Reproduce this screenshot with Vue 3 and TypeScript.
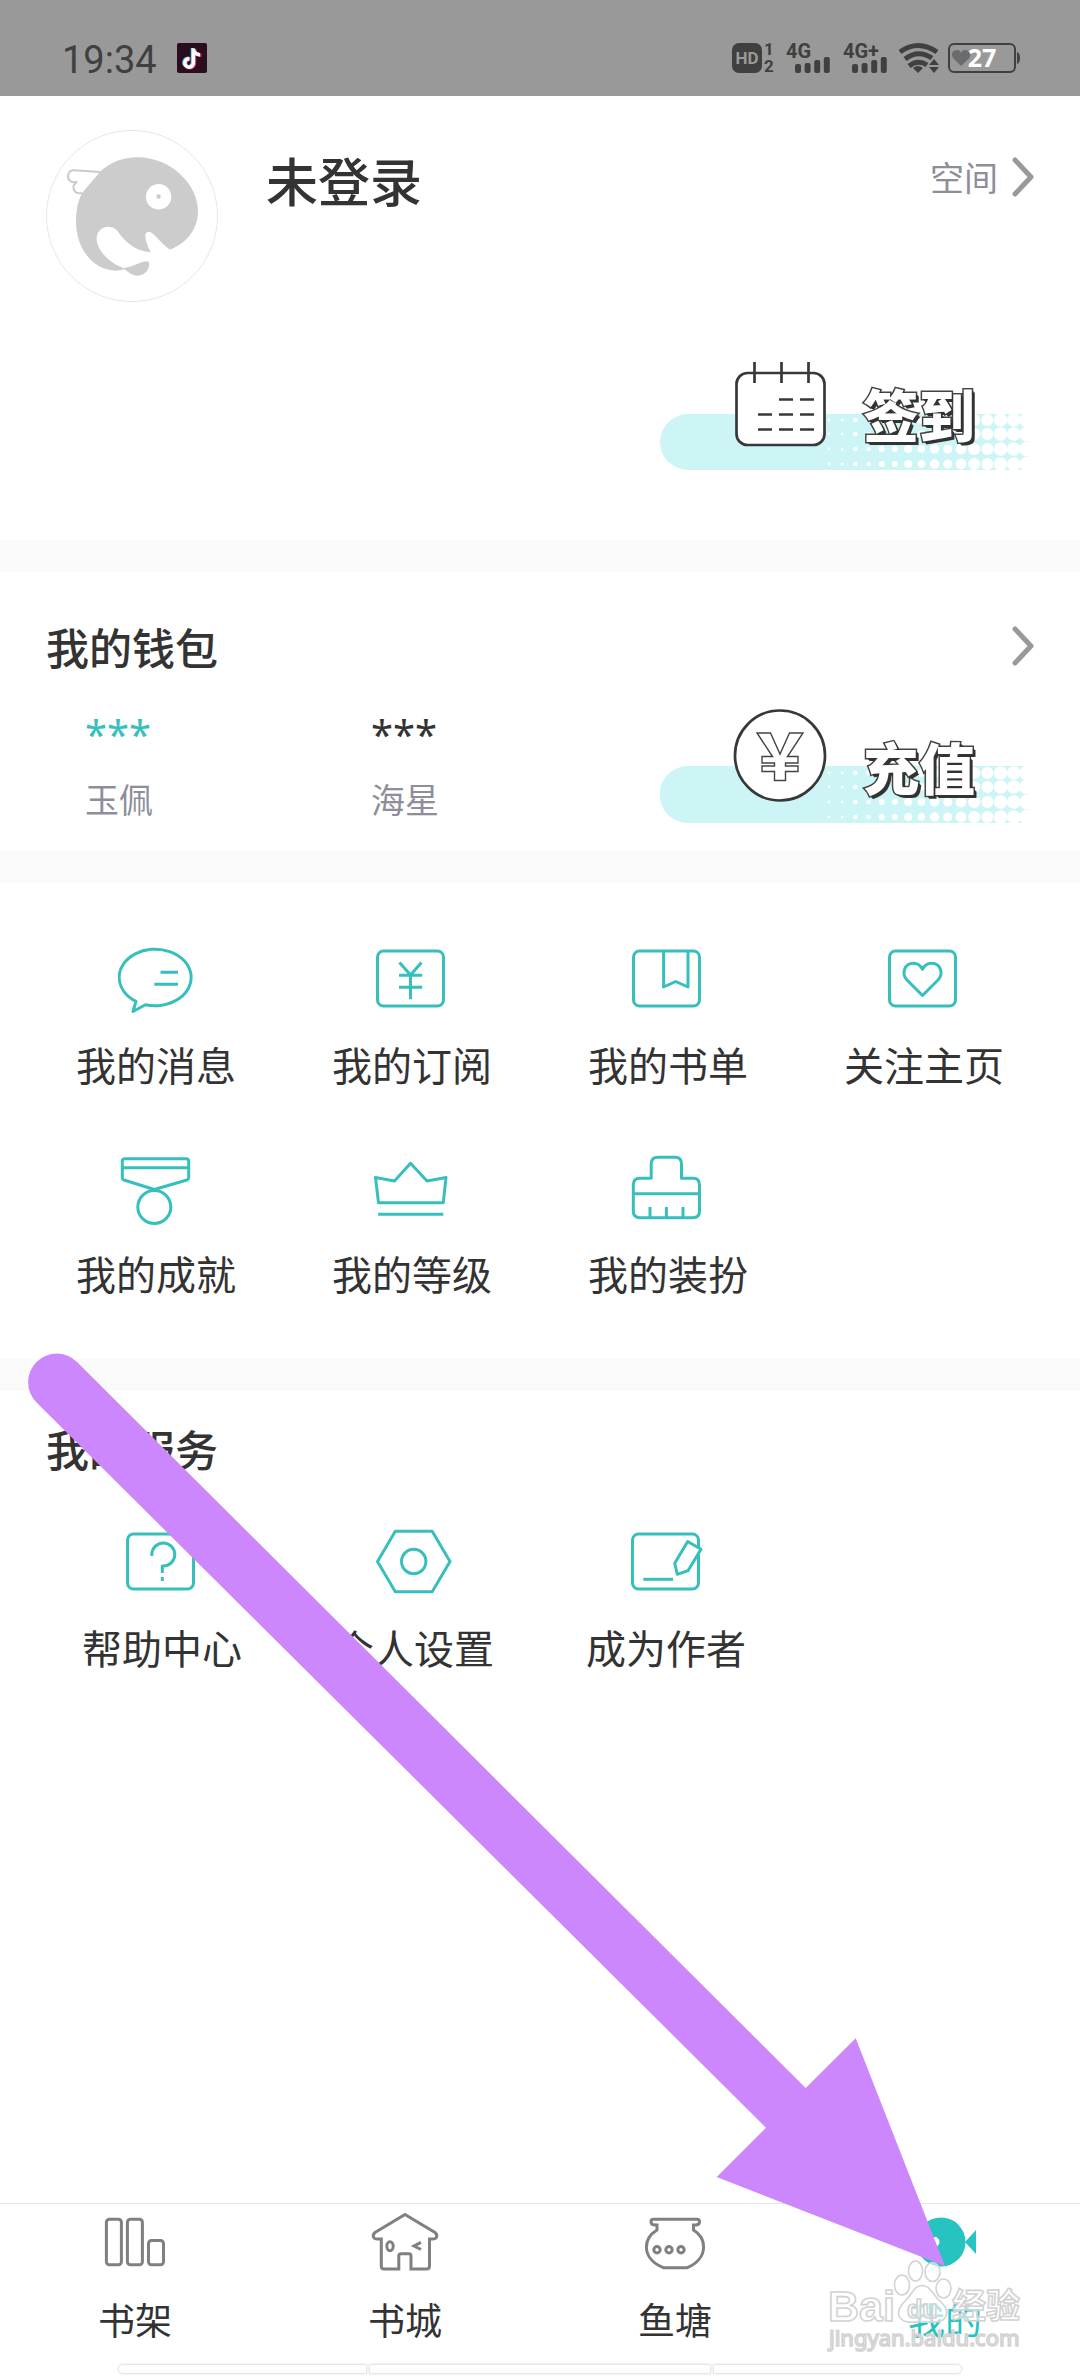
<script setup lang="ts">
interface MenuItem {
  id: string
  label: string
}

const menu: MenuItem[] = [
  { id: 'message', label: '我的消息' },
  { id: 'subscribe', label: '我的订阅' },
  { id: 'booklist', label: '我的书单' },
  { id: 'follow', label: '关注主页' },
  { id: 'achievement', label: '我的成就' },
  { id: 'level', label: '我的等级' },
  { id: 'dress', label: '我的装扮' },
]

const services: MenuItem[] = [
  { id: 'help', label: '帮助中心' },
  { id: 'settings', label: '个人设置' },
  { id: 'author', label: '成为作者' },
]

const tabs: MenuItem[] = [
  { id: 'shelf', label: '书架' },
  { id: 'store', label: '书城' },
  { id: 'pond', label: '鱼塘' },
  { id: 'mine', label: '我的' },
]

const banners = { sign: '签到', recharge: '充值' }

// Halftone dots that eat into the right end of the banner pill
const radii = [1.4, 1.6, 2.2, 2.3, 3, 3, 4, 3.8, 4.7, 4.5, 5.4, 6, 6, 6.8, 6.8, 7.6]
const dots = radii.flatMap((r, col) =>
  [64, 78, 93, 108].map((cy) => ({ cx: 169 + col * 13.2, cy, r })),
)
const signalBars = [9, 10, 13, 16]
</script>

<template>
  <div class="app">
    <header class="status">
      <div class="status-left">
        <time class="clock">19:34</time>
        <svg class="note" width="30" height="30" viewBox="0 0 30 30" aria-hidden="true">
          <rect width="30" height="30" rx="2" fill="#2b0d20" />
          <g fill="none" stroke-width="3.4">
            <path d="M15.5 5V19.5a4.3 4.3 0 1 1-4-4.3M15.5 6c1 3.5 3.5 5.2 7 5.5" stroke="#5fdfe4" />
            <path d="M17.5 6V20.5a4.3 4.3 0 1 1-4-4.3M17.5 7c1 3.5 3.5 5.2 7 5.5" stroke="#e0294f" />
            <path d="M16.5 5.5V20a4.3 4.3 0 1 1-4-4.3M16.5 6.5c1 3.5 3.5 5.2 6.5 5.5" stroke="#fff" />
          </g>
        </svg>
      </div>
      <svg class="status-icons" width="290" height="50" viewBox="731 33 290 50" role="img" aria-label="信号与电量">
        <g fill="#404040">
          <rect x="732" y="43" width="30" height="30" rx="7" />
          <text x="747" y="64" text-anchor="middle" class="st-hd">HD</text>
          <text x="769" y="55" text-anchor="middle" class="st-sim">1</text>
          <text x="769" y="72" text-anchor="middle" class="st-sim">2</text>
          <text x="786" y="58" class="st-net">4G</text>
          <text x="843" y="58" class="st-net">4G+</text>
          <template v-for="x in [795, 852]" :key="x">
            <rect v-for="(h, i) in signalBars" :key="i" :x="x + i * 9.6" :y="73 - h" width="6" :height="h" rx="2" />
          </template>
          <path d="M913 68q5-4 10 0l-5 5z" />
          <path d="M934 59l5 6h-10zM934 73l5-6h-10z" />
        </g>
        <g fill="none" stroke="#404040" stroke-width="5">
          <path d="M900 52Q918 39 937 52" />
          <path d="M905 59Q918 49 932 58" />
          <path d="M909 66Q918 59 927 65" />
          <rect x="949" y="44" width="66" height="28" rx="5" stroke-width="2" />
        </g>
        <path d="M1017 52q3 1 3 6t-3 6z" fill="#404040" />
        <path d="M961 66L953.5 58.5C950 54 953 50 957 50q3 0 4 3q1-3 4-3C970 50 972 54 969 58.5Z" fill="#6b6b6b" />
        <text x="982" y="67" text-anchor="middle" class="st-bat">27</text>
      </svg>
    </header>

    <main class="content">
      <section class="profile">
        <div class="profile-head">
          <svg class="avatar" width="172" height="172" viewBox="0 0 172 172" role="img" aria-label="头像">
            <circle cx="86" cy="86" r="85.5" fill="#fff" stroke="#e6e6e6" />
            <path
              d="M92 27.3C124 27.3 152 54 152 81C152 99 141 113 124 119.7C117 115 111 107 106.5 103.5C103 100.5 99.5 101.5 99.3 105.5C99.2 111 102 117 104.7 122.3C93 121.5 84 116 76 107C71.5 101.5 70 96.7 62 96.7C55.5 96.7 50.6 102 50.6 109C51 120 63 133 77.5 138C86 137 93 132.5 100 131.3C103 131 103.5 133 103 136C102 142 97 145.7 91 145.7C86 145.7 82.5 142 78 139C76 140.3 73 140.7 70 140.7C46 140 30 118 30 90.7C30 80 32 71 36 63.3C41 54 46 47 54 41.7C65 32 77 27.3 92 27.3Z"
              fill="#ccc"
            />
            <path d="M54 42L28 40.2C22 40 20.500 47 23.500 50.500C25.500 52.500 28.500 52.500 31 51.800C26.500 54.500 26.500 59 29.500 62C31.500 63.500 34 63.500 36 63" fill="#fff" stroke="#ccc" stroke-width="2" />
            <circle cx="112.6" cy="66.7" r="12.7" fill="#fff" />
            <circle cx="112.6" cy="66.5" r="2.2" fill="#ccc" />
          </svg>
          <h1 class="name">未登录</h1>
          <a class="space" href="#space">
            空间
            <svg class="chevron" width="22" height="40" viewBox="0 0 22 40" aria-hidden="true"><path d="M3 3L19 20L3 37" /></svg>
          </a>
        </div>
        <button class="banner" type="button">
          <svg class="banner-art" width="374" height="114" viewBox="0 0 374 114" aria-hidden="true">
            <path d="M28 58H368V114H28A28 28 0 0 1 28 58Z" fill="#cdf5f5" />
            <circle v-for="(d, i) in dots" :key="i" :cx="d.cx" :cy="d.cy" :r="d.r" fill="#fff" />
            <g stroke="#383838" fill="none" stroke-width="2.7">
              <rect x="76.5" y="17" width="88" height="72" rx="11" fill="#fff" />
              <path d="M94.5 6v21M121.5 6v21M148.5 6v21M119 43.5h14M140 43.5h14M98 58.5h14M119 58.5h14M140 58.5h14M98 73.5h14M119 73.5h14M140 73.5h14" />
            </g>
          </svg>
          <span class="banner-text">{{ banners.sign }}</span>
        </button>
      </section>

      <section class="wallet">
        <div class="wallet-head">
          <h2 class="title">我的钱包</h2>
          <a href="#wallet" aria-label="我的钱包">
            <svg class="chevron" width="22" height="40" viewBox="0 0 22 40" aria-hidden="true"><path d="M3 3L19 20L3 37" /></svg>
          </a>
        </div>
        <div class="wallet-body">
          <dl class="stats">
            <div class="stat">
              <dd class="value teal">***</dd>
              <dt>玉佩</dt>
            </div>
            <div class="stat">
              <dd class="value">***</dd>
              <dt>海星</dt>
            </div>
          </dl>
          <button class="banner" type="button">
            <svg class="banner-art" width="374" height="114" viewBox="0 0 374 114" aria-hidden="true">
              <path d="M28 57H368V114H28A28 28 0 0 1 28 57Z" fill="#cdf5f5" />
              <circle v-for="(d, i) in dots" :key="i" :cx="d.cx" :cy="d.cy" :r="d.r" fill="#fff" />
              <circle cx="120" cy="46.5" r="45" fill="#fff" stroke="#383838" stroke-width="2.7" />
              <path d="M97 24H110.5L120 45L129.5 24H143L127.5 47.5H138V54H125.5V57H138V62.5H125.5V71.5H114.5V62.5H102V57H114.5V54H102V47.5H112.5Z" fill="#fff" stroke="#444" stroke-width="1.4" />
            </svg>
            <span class="banner-text">{{ banners.recharge }}</span>
          </button>
        </div>
      </section>

      <nav class="menu grid" aria-label="我的">
        <a v-for="item in menu" :key="item.id" class="item" :href="'#' + item.id">
          <svg class="icon" width="76" height="76" viewBox="0 0 76 76" aria-hidden="true">
            <template v-if="item.id === 'message'">
              <path d="M18 61.4A36 28.3 0 1 1 27.5 64.7L15 71.5Z" />
              <path d="M42.5 32.3H60M36.3 44.3H60" />
            </template>
            <template v-else-if="item.id === 'subscribe'">
              <rect x="3.5" y="11" width="66" height="55" rx="6" />
              <path d="M25.5 22.5L36.5 35L47.5 22.5M25 35.3H48.2M25 47.3H48.2M36.5 35V59.3" />
            </template>
            <template v-else-if="item.id === 'booklist'">
              <rect x="3.5" y="11" width="66" height="55" rx="6" />
              <path d="M33.6 11V47L45.7 41.5L58 47V11" />
            </template>
            <template v-else-if="item.id === 'follow'">
              <rect x="3.5" y="11" width="66" height="55" rx="6" />
              <path d="M36.5 55.5L21 40C15 33.5 18.5 23.3 27.5 23.3C31.5 23.3 34.5 25.5 36.5 29.3C38.5 25.5 41.5 23.3 45.5 23.3C54.5 23.3 58 33.5 52 40Z" />
            </template>
            <template v-else-if="item.id === 'achievement'">
              <path d="M4.3 12Q4.3 9.7 7 9.7H68Q70.7 9.7 70.7 12V28.5Q70.7 30.3 69 31L36.3 40.5L6 31Q4.3 30.3 4.3 28.5ZM4.3 18.7H70.7" />
              <circle cx="36.3" cy="58" r="16.5" />
            </template>
            <template v-else-if="item.id === 'level'">
              <path d="M1.5 28.5L20.5 32L36.5 14.3L53 32L72 28.5L69.3 53.7H4.5Z" />
              <path d="M4.2 65.3H69.3" />
            </template>
            <template v-else>
              <path d="M21.2 29.3V15Q21.2 8.3 28 8.3H45Q51.5 8.3 51.5 15V29.3H63Q69.5 29.3 69.5 36V62Q69.5 68.7 63 68.7H10Q3.3 68.7 3.3 62V36Q3.3 29.3 10 29.3ZM3.3 44.7H69.5M20 58V68M36.4 58V68M53 58V68" />
            </template>
          </svg>
          <span class="label">{{ item.label }}</span>
        </a>
      </nav>

      <section class="services">
        <h2 class="title">我的服务</h2>
        <div class="grid">
          <a v-for="item in services" :key="item.id" class="item" :href="'#' + item.id">
            <svg class="icon" width="76" height="76" viewBox="0 0 76 76" aria-hidden="true">
              <template v-if="item.id === 'help'">
                <rect x="3.5" y="11" width="66" height="55" rx="6" />
                <path d="M27.8 33V31.5A11.5 11.5 0 1 1 39.3 43H38.3V50M38.3 54V58" />
              </template>
              <template v-else-if="item.id === 'settings'">
                <path d="M1.5 38.5L19.3 8.3H56.2L74 38.5L56.2 68.7H19.3Z" />
                <circle cx="37.7" cy="38.5" r="12.2" />
              </template>
              <template v-else>
                <rect x="4.500" y="11" width="66" height="55" rx="6" />
                <path d="M15.3 56.3H45" />
                <path d="M59.7 18.5L73 26.3L60 47.7L49.3 51.3L46.7 40.3Z" class="pencil" />
              </template>
            </svg>
            <span class="label">{{ item.label }}</span>
          </a>
        </div>
      </section>
    </main>

    <nav class="tabs" aria-label="主导航">
      <a v-for="tab in tabs" :key="tab.id" class="tab" :class="{ active: tab.id === 'mine' }" :href="'#' + tab.id">
        <svg class="tab-icon" width="72" height="60" viewBox="0 0 72 60" aria-hidden="true">
          <template v-if="tab.id === 'shelf'">
            <rect x="7.4" y="7.3" width="15" height="45.5" rx="3" />
            <rect x="28.4" y="7.3" width="15" height="45.5" rx="3" />
            <rect x="49.5" y="28.5" width="15" height="24.3" rx="3" />
          </template>
          <template v-else-if="tab.id === 'store'">
            <path d="M36 2.5L66 20.5Q69 23 67 26Q66 27 64 27H60.5V54Q60.5 57 57.5 57H42V44Q42 41.7 40 41.7H32Q29.8 41.7 29.8 44V57H15Q12.3 57 12.3 54V27H8Q6 27 5 26Q3 23 6 20.5Z" />
            <ellipse cx="21" cy="34.3" rx="3.2" ry="4.5" />
            <path d="M52 30.3L45 34L52 37.5" />
          </template>
          <template v-else-if="tab.id === 'pond'">
            <path d="M14.5 7.3H58Q60.5 7.3 60.5 10Q60.5 12.7 57 13H54.5V18C61 22 64.6 28 64.6 35C64.6 44 58 51.5 48.4 55.7H24.3C14 51.5 7.4 44 7.4 35C7.4 28 11.5 22 18 18V13H15.5Q12 12.7 12 10Q12 7.3 14.5 7.3Z" />
            <circle cx="18" cy="37.7" r="3.2" />
            <circle cx="30" cy="37.7" r="3.2" />
            <circle cx="42" cy="37.7" r="3.2" />
          </template>
          <g v-else class="fish">
            <circle cx="32" cy="30" r="24.5" />
            <path d="M56 30L67 18V42Z" />
            <circle cx="25.5" cy="30" r="5" fill="#fff" />
          </g>
        </svg>
        <span class="tab-label">{{ tab.label }}</span>
      </a>
      <div class="gesture" aria-hidden="true"><i></i><i></i><i></i></div>
    </nav>

    <svg class="arrow" width="920" height="914" viewBox="28 1353 920 914" aria-hidden="true">
      <path d="M36.5 1402.5A28.500 28.500 0 1 1 77 1362L805.7 2088L855.7 2038.3L945 2266L716.7 2177L766 2127.7Z" fill="#cb87fb" />
    </svg>

    <svg class="watermark" width="200" height="100" viewBox="825 2258 200 100" role="img" aria-label="Baidu 经验">
      <g fill="#fff" fill-opacity="0.6" stroke="#d2d2d2" stroke-width="1.6">
        <text x="828" y="2321" class="wm-big">Bai</text>
        <text x="952" y="2318" class="wm-cn">经验</text>
        <text x="829" y="2346" class="wm-url">jingyan.baidu.com</text>
        <ellipse cx="902" cy="2285" rx="7.5" ry="10" />
        <ellipse cx="915.5" cy="2271" rx="7" ry="10" />
        <ellipse cx="932.5" cy="2272" rx="7.5" ry="9.5" />
        <ellipse cx="943.5" cy="2288.5" rx="7.5" ry="9.5" />
        <path d="M922 2285.5C929 2285.5 932 2292 937 2298C943 2304 949 2309 946 2316C943 2324 932 2322 922 2322C912 2322 903 2324 899 2316C897 2309 902 2304 908 2298C913 2292 915 2285.5 922 2285.5Z" />
        <text x="907" y="2318" class="wm-du">du</text>
      </g>
    </svg>
  </div>
</template>

<style>
body {
  margin: 0;
  background: #fff;
}
</style>

<style scoped>
.app {
  position: relative;
  display: flex;
  flex-direction: column;
  min-height: 100vh;
  overflow: hidden;
  background: #fff;
  color: #333;
  font-family: "Noto Sans CJK SC", "Noto Sans", sans-serif;
}
a {
  color: inherit;
  text-decoration: none;
}
svg {
  display: block;
  flex: none;
}
h1,
h2,
dl,
dd {
  margin: 0;
}
.status {
  display: flex;
  align-items: center;
  justify-content: space-between;
  height: 96px;
  box-sizing: border-box;
  padding: 20px 59px 0 62px;
  background: #999;
}
.status-left {
  display: flex;
  align-items: center;
  gap: 20px;
}
.clock {
  padding-top: 4px;
  font: 38px/48px Roboto, sans-serif;
  color: #404040;
}
.st-hd {
  font: bold 17px Roboto, sans-serif;
  fill: #999;
}
.st-sim {
  font: bold 17px Roboto, sans-serif;
}
.st-net {
  font: bold 20px Roboto, sans-serif;
}
.st-bat {
  font: bold 25px "Open Sans", sans-serif;
  fill: #fff;
}
.content {
  flex: 1;
}
.profile {
  display: flex;
  flex-direction: column;
  padding: 34px 46px 70px;
}
.profile-head {
  display: flex;
  align-items: flex-start;
  margin-bottom: 54px;
}
.name {
  flex: 1;
  padding: 14px 0 0 48px;
  font-size: 52px;
  line-height: 72px;
  font-weight: 500;
}
.space {
  display: flex;
  align-items: center;
  gap: 14px;
  padding-top: 11px;
  font-size: 34px;
  line-height: 72px;
  color: #8e8e9b;
}
.chevron {
  fill: none;
  stroke: #999;
  stroke-width: 5;
  stroke-linecap: round;
  stroke-linejoin: round;
}
.banner {
  position: relative;
  align-self: flex-end;
  width: 374px;
  height: 114px;
  padding: 0 0 0 203px;
  border: 0;
  background: none;
  font-family: inherit;
  text-align: left;
}
.banner-art {
  position: absolute;
  inset: 0;
}
.banner-text {
  position: relative;
  font-size: 56px;
  line-height: 78px;
  font-weight: 900;
  color: #fff;
  -webkit-text-stroke: 3px #444;
  paint-order: stroke fill;
  text-shadow: 2px 2px 0 #333, 3px 3px 0 #333;
}
.wallet {
  padding: 44px 46px 28px;
  border-top: 32px solid #fafafa;
}
.wallet-head {
  display: flex;
  align-items: center;
  justify-content: space-between;
  margin-bottom: 33px;
}
.title {
  font-size: 43px;
  line-height: 60px;
  font-weight: 500;
}
.wallet-body {
  display: flex;
  align-items: flex-end;
  justify-content: space-between;
}
.stats {
  display: flex;
  flex: 1;
  padding-left: 39px;
}
.stat {
  width: 286px;
}
.value {
  margin-bottom: 22px;
  font: 40px/38px "Noto Sans", sans-serif;
}
.teal {
  color: #36bfbd;
}
dt {
  font-size: 34px;
  line-height: 48px;
  color: #8e8e9b;
}
.grid {
  display: grid;
  grid-template-columns: repeat(4, 1fr);
  row-gap: 57px;
}
.menu {
  padding: 57px 28px 58px;
  border-top: 32px solid #fafafa;
}
.item {
  display: flex;
  flex-direction: column;
  align-items: center;
  gap: 20px;
}
.icon {
  fill: none;
  stroke: #36bfbd;
  stroke-width: 3;
  stroke-linejoin: round;
}
.pencil {
  fill: #fff;
}
.label {
  font-size: 40px;
  line-height: 56px;
}
.services {
  padding: 27px 36px 60px;
  border-top: 32px solid #fafafa;
}
.services .title {
  padding-left: 10px;
  margin-bottom: 45px;
}
.tabs {
  position: relative;
  display: flex;
  padding: 8px 0 31px;
  border-top: 1px solid #e6e6e6;
}
.tab {
  flex: 1;
  display: flex;
  flex-direction: column;
  align-items: center;
  gap: 21px;
}
.tab-icon {
  fill: none;
  stroke: #808080;
  stroke-width: 3;
}
.fish {
  fill: #27c3c1;
  stroke: none;
}
.tab-label {
  font-size: 37px;
  line-height: 52px;
}
.active {
  color: #27c3c1;
}
.gesture {
  position: absolute;
  left: 11%;
  right: 11%;
  bottom: 3px;
  display: flex;
  gap: 4px;
}
.gesture i {
  flex: 247;
  height: 8px;
  background: #fff;
  box-shadow: 0 0 2px 1px #ddd;
}
.gesture i:nth-child(2) {
  flex: 340;
}
.gesture i:first-child {
  border-radius: 4px 0 0 4px;
}
.gesture i:last-child {
  border-radius: 0 4px 4px 0;
}
.arrow {
  position: absolute;
  left: 28px;
  top: 1353px;
  pointer-events: none;
}
.watermark {
  position: absolute;
  right: 55px;
  bottom: 18px;
  pointer-events: none;
}
.wm-big {
  font: bold 43px "Liberation Sans", sans-serif;
}
.wm-cn {
  font: bold 34px "Noto Sans CJK SC", sans-serif;
}
.wm-url {
  font: 22px "Noto Sans", sans-serif;
}
.wm-du {
  font: bold 25px "Liberation Sans", sans-serif;
}
</style>
